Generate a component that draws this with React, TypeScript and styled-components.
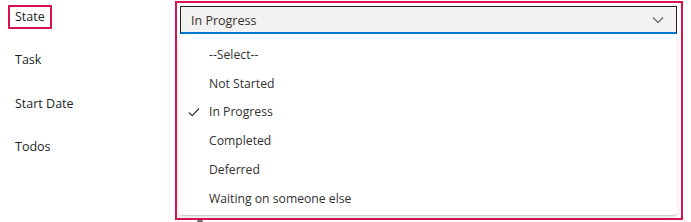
import React from "react";
import styled, { createGlobalStyle } from "styled-components";

const Global = createGlobalStyle`
  html, body { margin: 0; padding: 0; background: #fff; }
  body { font-family: "Open Sans", "Noto Sans", sans-serif; color: #323130; }
  * { box-sizing: border-box; }
`;

const Page = styled.div`
  display: flex;
  width: 691px;
  height: 222px;
  overflow: hidden;
`;

const LabelColumn = styled.div`
  width: 175px;
  flex: none;
  display: flex;
  flex-direction: column;
  padding-top: 5px;
`;

const LabelRow = styled.div<{ boxed?: boolean }>`
  height: ${(p) => (p.boxed ? "45px" : "43.5px")};
  display: flex;
  align-items: flex-start;
  padding-left: ${(p) => (p.boxed ? "8px" : "15px")};
`;

const Label = styled.span<{ boxed?: boolean }>`
  font-size: 12.5px;
  line-height: 20px;
  color: #201f1e;
  padding: ${(p) => (p.boxed ? "0 5px" : "0")};
  border: ${(p) => (p.boxed ? "2px solid #d8134f" : "none")};
`;

const Annotation = styled.div`
  margin-top: 1px;
  width: 508px;
  height: 219px;
  border: 2px solid #d8134f;
  padding: 3px 4px 3px 2px;
  display: flex;
  flex-direction: column;
  position: relative;
`;

const SelectBox = styled.div`
  margin-left: 1px;
  height: 28px;
  border: 1px solid #201f1e;
  border-bottom: 2px solid #0078d4;
  background: #f3f2f1;
  display: flex;
  align-items: center;
  justify-content: space-between;
  padding: 1px 12px 0 10px;
  font-size: 12.5px;
  color: #323130;
`;

const Menu = styled.ul`
  list-style: none;
  margin: 2px 0 0 0;
  padding: 4px 0 0 0;
  height: 179px;
  background: #fff;
  border-radius: 4px;
  box-shadow: 0 1.6px 3.6px rgba(0, 0, 0, 0.13), 0 0.3px 0.9px rgba(0, 0, 0, 0.11);
  display: flex;
  flex-direction: column;
`;

const Option = styled.li`
  height: 28.8px;
  display: flex;
  align-items: center;
  font-size: 12.2px;
  color: #323130;
  padding-left: 9px;
`;

const CheckSlot = styled.span`
  width: 21px;
  display: flex;
  align-items: center;
  justify-content: flex-start;
`;

const Peek = styled.div`
  position: absolute;
  left: 20px;
  bottom: -4px;
  width: 6px;
  height: 2px;
  background: #605e5c;
  border-radius: 2px 2px 0 0;
`;

const Chevron = () => (
  <svg width="12" height="8" viewBox="0 0 12 8" fill="none">
    <path d="M1 1.5 L6 6.5 L11 1.5" stroke="#605e5c" strokeWidth="1.1" />
  </svg>
);

const Check = () => (
  <svg width="12" height="10" viewBox="0 0 12 10" fill="none">
    <path d="M1 5.5 L4.2 8.7 L11 1.5" stroke="#323130" strokeWidth="1.1" />
  </svg>
);

const options = ["--Select--", "Not Started", "In Progress", "Completed", "Deferred", "Waiting on someone else"];
const labels = ["State", "Task", "Start Date", "Todos"];

export default function App() {
  return (
    <>
      <Global />
      <Page>
        <LabelColumn>
          {labels.map((l, i) => (
            <LabelRow key={l} boxed={i === 0}>
              <Label boxed={i === 0}>{l}</Label>
            </LabelRow>
          ))}
        </LabelColumn>
        <Annotation>
          <SelectBox>
            <span>In Progress</span>
            <Chevron />
          </SelectBox>
          <Menu>
            {options.map((o) => (
              <Option key={o}>
                <CheckSlot>{o === "In Progress" ? <Check /> : null}</CheckSlot>
                {o}
              </Option>
            ))}
          </Menu>
          <Peek />
        </Annotation>
      </Page>
    </>
  );
}
